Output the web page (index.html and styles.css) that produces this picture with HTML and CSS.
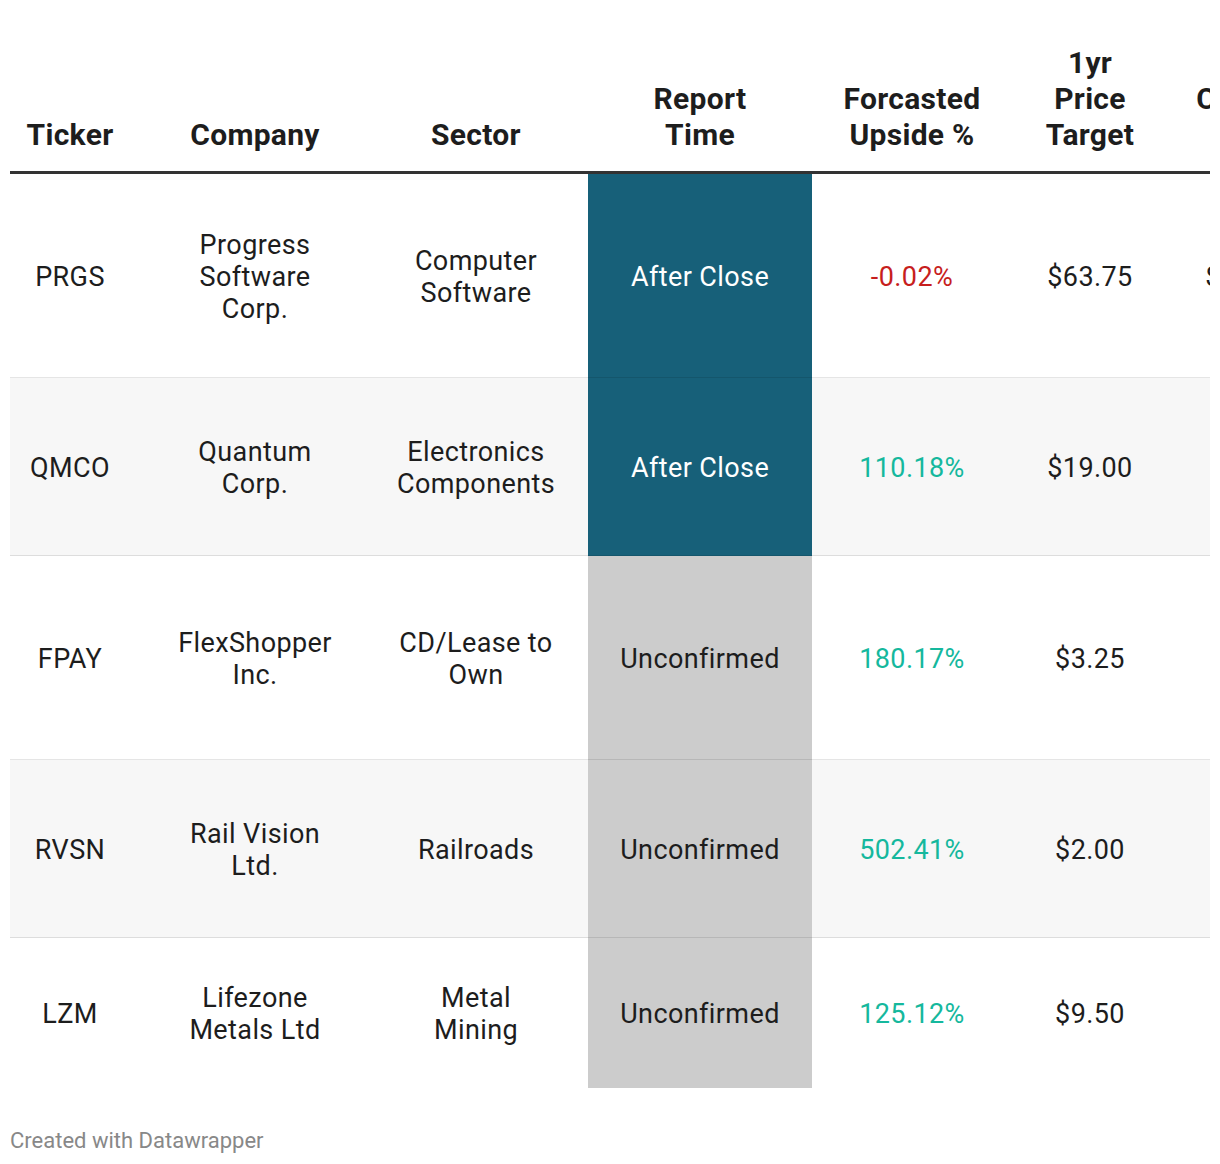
FILE: index.html
```html
<!DOCTYPE html>
<html>
<head>
<meta charset="utf-8">
<link rel="stylesheet" href="styles.css">
</head>
<body>
<div class="chart">
  <div class="table-wrap">
    <table class="dw-table">
      <colgroup>
        <col class="c-ticker"><col class="c-company"><col class="c-sector"><col class="c-report"><col class="c-upside"><col class="c-target"><col class="c-price">
      </colgroup>
      <thead>
        <tr>
          <th class="ticker">Ticker</th>
          <th>Company</th>
          <th>Sector</th>
          <th>Report<br>Time</th>
          <th>Forcasted<br>Upside %</th>
          <th>1yr<br>Price<br>Target</th>
          <th>Current<br>Price</th>
        </tr>
      </thead>
      <tbody>
        <tr class="r-tall">
          <td class="ticker">PRGS</td>
          <td>Progress<br>Software<br>Corp.</td>
          <td>Computer<br>Software</td>
          <td class="after">After Close</td>
          <td class="neg">-0.02%</td>
          <td>$63.75</td>
          <td>$63.76</td>
        </tr>
        <tr class="r-mid odd">
          <td class="ticker">QMCO</td>
          <td>Quantum<br>Corp.</td>
          <td>Electronics<br>Components</td>
          <td class="after">After Close</td>
          <td class="pos">110.18%</td>
          <td>$19.00</td>
          <td>$9.04</td>
        </tr>
        <tr class="r-tall">
          <td class="ticker">FPAY</td>
          <td>FlexShopper<br>Inc.</td>
          <td>CD/Lease to<br>Own</td>
          <td class="unconf">Unconfirmed</td>
          <td class="pos">180.17%</td>
          <td>$3.25</td>
          <td>$1.16</td>
        </tr>
        <tr class="r-mid odd">
          <td class="ticker">RVSN</td>
          <td>Rail Vision<br>Ltd.</td>
          <td>Railroads</td>
          <td class="unconf">Unconfirmed</td>
          <td class="pos">502.41%</td>
          <td>$2.00</td>
          <td>$0.33</td>
        </tr>
        <tr class="r-short">
          <td class="ticker">LZM</td>
          <td>Lifezone<br>Metals Ltd</td>
          <td>Metal<br>Mining</td>
          <td class="unconf">Unconfirmed</td>
          <td class="pos">125.12%</td>
          <td>$9.50</td>
          <td>$4.22</td>
        </tr>
      </tbody>
    </table>
  </div>
  <div class="footer">Created with Datawrapper</div>
</div>
</body>
</html>
```
FILE: styles.css
```css
html, body {
  margin: 0;
  padding: 0;
  background: #ffffff;
}
body {
  font-family: Roboto, "Noto Sans", sans-serif;
  color: #1d1d1d;
}
.chart {
  padding: 45px 10px 0 10px;
}
.table-wrap {
  width: 1200px;
  overflow: hidden;
}
.dw-table {
  border-collapse: collapse;
  table-layout: fixed;
  width: 1318px;
}
.c-ticker { width: 136px; }
.c-company { width: 218px; }
.c-sector { width: 224px; }
.c-report { width: 224px; }
.c-upside { width: 200px; }
.c-target { width: 156px; }
.c-price { width: 160px; }

.dw-table th {
  font-size: 30px;
  line-height: 36px;
  letter-spacing: 0.3px;
  font-weight: 700;
  text-align: center;
  vertical-align: bottom;
  padding: 0 0 18px 0;
  border-bottom: 3px solid #333333;
  color: #1d1d1d;
}
.dw-table th.ticker,
.dw-table td.ticker {
  padding-right: 16px;
}
.dw-table td {
  font-size: 27px;
  line-height: 32px;
  letter-spacing: 0.4px;
  text-align: center;
  vertical-align: middle;
  padding: 2px 0 0 0;
  border-top: 1px solid rgba(0, 0, 0, 0.1);
}
.dw-table tbody tr:first-child td {
  border-top: none;
}
.r-tall td { height: 201px; }
.r-mid td { height: 175px; }
.r-short td { height: 148px; }
.odd { background: #f7f7f7; }
td.after {
  background: #176079;
  color: #ffffff;
}
td.unconf {
  background: #cccccc;
}
td.neg { color: #c71e1d; }
td.pos { color: #15b89d; }

.footer {
  margin-top: 41px;
  font-size: 22px;
  line-height: 24px;
  color: #888888;
}
```
